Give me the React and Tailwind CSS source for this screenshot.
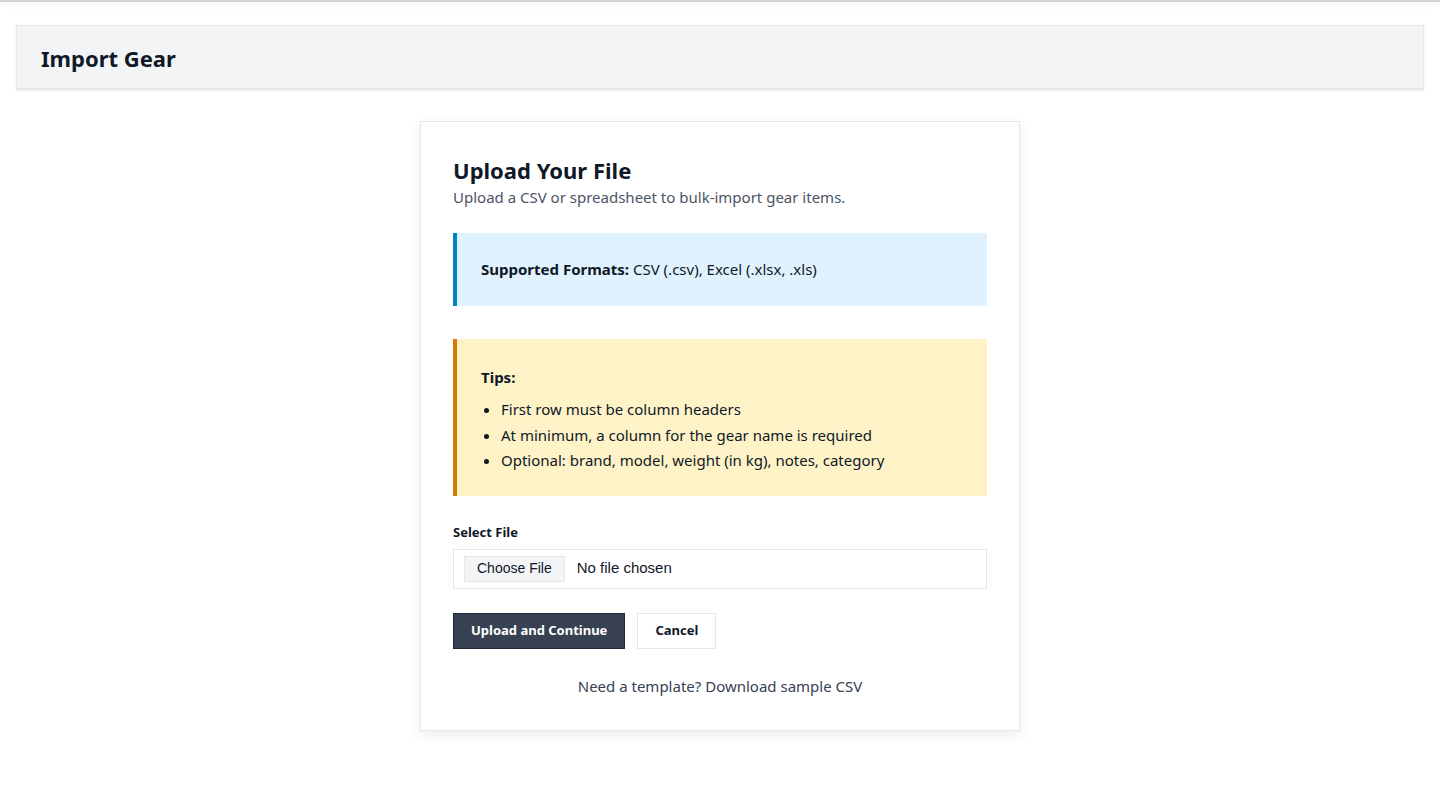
export default function App() {
  return (
    <div className="min-h-[788px] bg-white text-gray-900 font-['Noto_Sans',sans-serif]">
      <div className="h-[2px] bg-[#d4d4d8] shadow-[0_2px_6px_rgba(0,0,0,0.1)]"></div>
      <div className="px-4 pt-[23px]">
        <div className="h-16 flex items-center bg-[#f3f4f6] border border-[#e5e7eb] shadow-sm px-6 pt-[2px]">
          <h1 className="text-[22px] font-bold leading-none">Import Gear</h1>
        </div>
      </div>
      <div className="flex justify-center pt-8">
        <div className="w-[600px] bg-white border border-[#e5e7eb] shadow-[0_4px_12px_rgba(0,0,0,0.08)] px-8 pt-[34px] pb-[34px]">
          <h2 className="text-[22px] font-bold leading-7">Upload Your File</h2>
          <p className="text-[15px] text-gray-600 leading-5 mt-[3px]">Upload a CSV or spreadsheet to bulk-import gear items.</p>

          <div className="mt-[26px] bg-[#e0f2fe] border-l-4 border-[#0284c7] px-6 py-6 text-[15px] leading-[25px]">
            <span className="font-bold">Supported Formats:</span> CSV (.csv), Excel (.xlsx, .xls)
          </div>

          <div className="mt-[33px] bg-[#fef3c7] border-l-4 border-[#d97706] px-6 pt-[26px] pb-[22px] text-[15px]">
            <div className="font-bold leading-6">Tips:</div>
            <ul className="list-disc pl-5 mt-[8px] leading-[25.5px]">
              <li>First row must be column headers</li>
              <li>At minimum, a column for the gear name is required</li>
              <li>Optional: brand, model, weight (in kg), notes, category</li>
            </ul>
          </div>

          <div className="mt-[28px] text-[13px] font-bold leading-4">Select File</div>
          <div className="mt-[9px] h-10 border border-[#e5e7eb] flex items-center px-[10px] font-['Liberation_Sans',Arial,sans-serif]">
            <span className="h-[26px] px-3 flex items-center bg-[#f3f4f6] border border-[#e5e7eb] text-gray-900 text-[14px]">Choose File</span>
            <span className="ml-3 text-gray-900 text-[15px]">No file chosen</span>
          </div>

          <div className="mt-6 flex gap-3">
            <button className="h-9 px-[17px] bg-[#374151] border border-[#1f2937] text-white text-[13px] font-bold">Upload and Continue</button>
            <button className="h-9 px-[17px] bg-white border border-[#e5e7eb] text-gray-900 text-[13px] font-bold">Cancel</button>
          </div>

          <p className="mt-[27px] text-center text-[15px] text-gray-700 leading-5">Need a template? Download sample CSV</p>
        </div>
      </div>
    </div>
  );
}
